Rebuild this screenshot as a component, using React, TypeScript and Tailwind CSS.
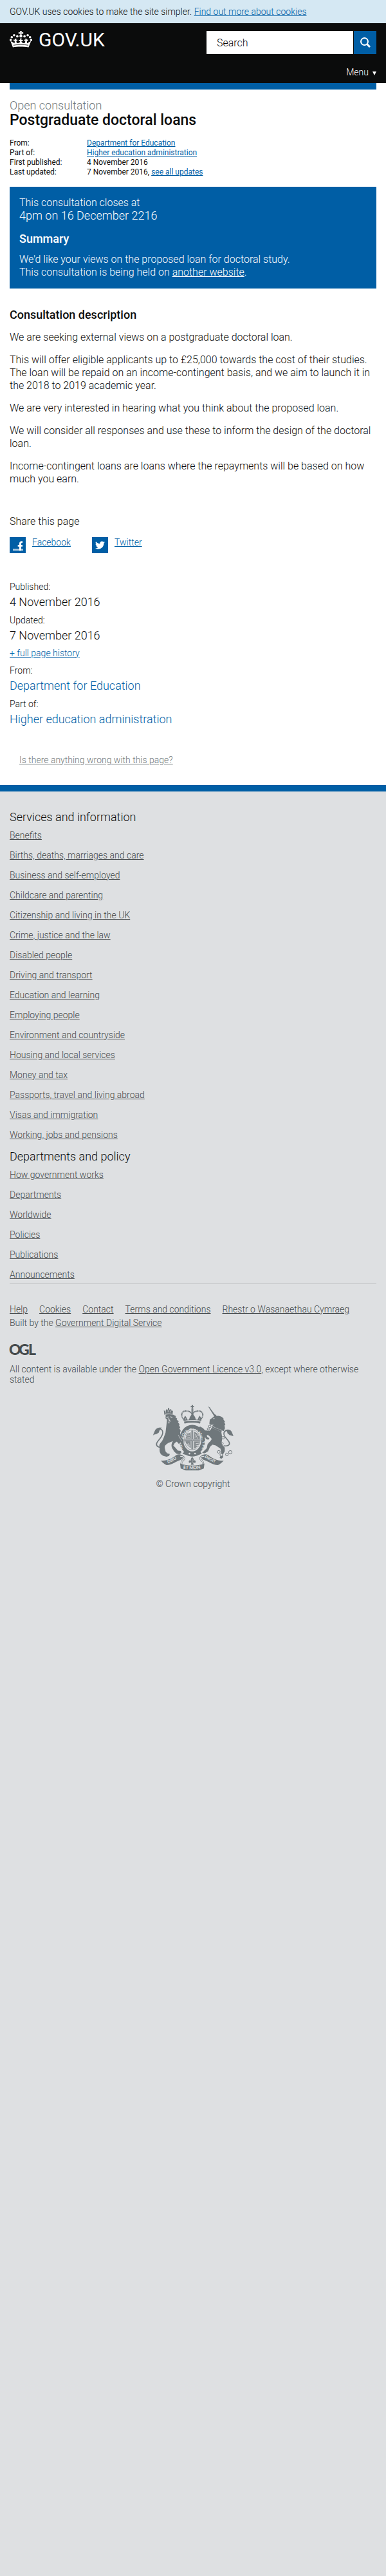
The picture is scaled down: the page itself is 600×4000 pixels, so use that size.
import React from 'react';
import { FaTwitter } from 'react-icons/fa';

const services = [
  'Benefits',
  'Births, deaths, marriages and care',
  'Business and self-employed',
  'Childcare and parenting',
  'Citizenship and living in the UK',
  'Crime, justice and the law',
  'Disabled people',
  'Driving and transport',
  'Education and learning',
  'Employing people',
  'Environment and countryside',
  'Housing and local services',
  'Money and tax',
  'Passports, travel and living abroad',
  'Visas and immigration',
  'Working, jobs and pensions',
];

const departments = [
  'How government works',
  'Departments',
  'Worldwide',
  'Policies',
  'Publications',
  'Announcements',
];

const metaLinks = ['Help', 'Cookies', 'Contact', 'Terms and conditions', 'Rhestr o Wasanaethau Cymraeg'];

function Crown() {
  return (
    <svg className="h-[26px] w-[35px]" viewBox="0 0 106 78" fill="#fff" aria-hidden="true">
      <path d="M49 0h8l-1 7 8-2v9l-8-2v6h-6v-6l-8 2V5l8 2z" />
      <circle cx="53" cy="24" r="7" />
      <circle cx="5" cy="42" r="5.5" />
      <circle cx="10" cy="29" r="5.5" />
      <circle cx="21" cy="20" r="5.5" />
      <circle cx="36" cy="25" r="5.5" />
      <circle cx="101" cy="42" r="5.5" />
      <circle cx="96" cy="29" r="5.5" />
      <circle cx="85" cy="20" r="5.5" />
      <circle cx="70" cy="25" r="5.5" />
      <path d="M4 47l9 5 10 6 1-12-5 2v-8l5 1 1-5h7l-1 6 5-2v8l-5-2 2 10 6 1 8-3 3-7-7 1v-7l7 1-2-7h9l-2 7 7-1v7l-7-1 3 7 8 3 6-1 2-10-5 2v-8l5 2-1-6h7l1 5 5-1v8l-5-2 1 12 10-6 9-5-12 30c-24-4-54-4-74 0z" />
      <path d="M18 67c22-4 48-4 70 0" fill="none" stroke="#0b0c0c" strokeWidth="2.5" />
    </svg>
  );
}

function FacebookIcon() {
  return (
    <svg className="size-[25px] shrink-0 bg-[#005ea5]" viewBox="0 0 75 75" aria-hidden="true">
      <path d="M15 54h48v9H15z" fill="#a3c4dd" />
      <path d="M45 63V44h-7v-8h7v-6c0-8 5-12 15-11v8c-5 0-6 1-6 4v5h6v8h-6v19z" fill="#fff" />
    </svg>
  );
}

function LogoOgl() {
  return (
    <svg className="h-[18px] w-[41px] overflow-visible" viewBox="0 0 41 18" role="img" aria-label="OGL">
      <g fill="#454a4c" fontFamily="Lato, sans-serif" fontWeight="900" fontSize="23">
        <text x="-1" y="17">O</text>
        <text x="14" y="17">G</text>
        <text x="29" y="17">L</text>
      </g>
    </svg>
  );
}

function Crest() {
  const ink = '#6f777b';
  const paper = '#dee0e2';
  return (
    <svg className="h-[103px] w-[125px] overflow-visible" viewBox="54 32 376 308" fill={ink} aria-hidden="true">
      <defs>
        <path id="garter" d="M196 246A48 59 0 1 1 278 246" />
        <path id="scroll-left" d="M123 306Q152 296 174 277" />
        <path id="scroll-right" d="M294 277Q326 300 352 305" />
        <path id="scroll-mid" d="M194 330Q237 338 281 329" />
      </defs>

      {/* royal crown */}
      <path d="M234 33h7l-1 5 5-1v7l-5-1 2 8h-9l2-8-5 1v-7l5 1z" />
      <path d="M233 51h9v36h-9z" opacity=".85" />
      <g fill="none" stroke={ink} strokeWidth="6" strokeDasharray="5 1.5">
        <path d="M200 103C180 85 186 62 206 61c15 0 24 5 29 13" />
        <path d="M274 103C294 85 288 62 268 61c-15 0-24 5-29 13" />
      </g>
      <path d="M196 108l3-17 5-8 6 9 4 10 8 0 4-13 8-11 4-4 4 4 8 11 4 13 8 0 4-10 6-9 5 8 3 17c-26-6-56-6-84 0z" />
      <path d="M198 111c26-6 52-6 78 0l-3 9c-24-6-48-6-72 0z" />
      <path d="M201 109c24-5 48-5 72 0" fill="none" stroke={paper} strokeWidth="2" strokeDasharray="5 4" />
      <path d="M217 86v12m39-12v12M205 95v6m64-6v6" stroke={paper} strokeWidth="2.5" />

      {/* garter and shield */}
      <ellipse cx="237" cy="197" rx="63" ry="71" fill={paper} />
      <ellipse cx="237" cy="197" rx="51" ry="62" fill="none" stroke={ink} strokeWidth="18" />
      <text fill={paper} fontFamily="Lato, sans-serif" fontWeight="900" fontSize="19">
        <textPath href="#garter">HONI SOIT QUI MAL Y PENSE</textPath>
      </text>
      <ellipse cx="237" cy="196" rx="37" ry="47" fill={paper} stroke={ink} strokeWidth="2" />
      <path d="M206 190l3-17 8-11 5 4 7-7 2 31zM245 157l14 8 10 15 2 11h-26zM205 202h25v33l-12-9-10-14zM245 203h26l-4 16-10 13-12 6z" opacity=".8" />
      <path d="M210 172l16 5m-18 4 18 5m-11-19 8 3m26-2 14 23m0-18-14 12m-37 28 12 16m-7-18 8 12m28-9 18-3m-18 13 16-3m-15 12 10-4" stroke={paper} strokeWidth="2.5" />
      <path d="M237 152v88M202 196h70" stroke={ink} strokeWidth="8" />
      <path d="M237 152v88M202 196h70" stroke={paper} strokeWidth="2" />
      <path d="M204 246c20 14 46 14 67 1l11 14c-12 2-22 12-45 13-20-1-32-11-46-12z" />
      <circle cx="224" cy="260" r="4" fill={paper} />
      <circle cx="250" cy="260" r="4" fill={paper} />

      {/* lion */}
      <path d="M107 75l-2-16 7 4 3-10 7 4 2-10h5l1 9 8-4 3 10 6-3-2 17c-14-4-25-4-38-1z" />
      <path d="M112 60v9m12-12v10m12-8v9" stroke={paper} strokeWidth="2.5" />
      <path d="M107 79c14-4 28-4 40-1l14 7-3 5 9 7-3 4 10 9-4 3 9 12-5 1 7 13-5 2 7 13-3 7 2 14 8 16 7 4-1 18-9 5-5-12-7 10-10-12-8 5c-8 7-8 16 0 22l13 15 14 2 2 9-8 6-14-2-12-11-9-15c-5-10-4-22 4-33-16 6-29 10-37 21-5 9 2 18 2 27l8 9 12 3-3 9-12 4-17-5c-14-8-18-19-15-37l-2-11c3-12 12-16 18-30l11-29 4-34 3-28-7-6 1-14-5-3 2-14-6-6z" />
      <path d="M116 91l10-2m9-1 9 4m-17 3 3 12 6 2m-8 2 0 8" stroke={paper} strokeWidth="4" fill="none" />
      <path d="M172 173c5 12 10 20 17 27M148 223l20-11" stroke={paper} strokeWidth="2" fill="none" />
      <path d="M88 231c-16-2-23-12-15-24 10-16 28-28 26-48-2-14-15-17-24-8-7 8-9 13-18 20" fill="none" stroke={ink} strokeWidth="5" />
      <path d="M95 139c-20-3-30 5-34 17l-8 20 9-9 4 4 14-8 5-13z" />

      {/* unicorn */}
      <path d="M311 39l7 5 31 42-7 4z" />
      <path d="M319 102l18-14 10-12 4 9c15-4 27 4 34 14l-3 2 8 9-3 4 5 11-4 3 2 14-6 13-44-18-3-12-14 1-6-6z" />
      <path d="M335 97l6-1" stroke={paper} strokeWidth="3" />
      <path d="M333 127l7-3 2 8 8-4 3 8 8-3 2 9 8-2 1 8 6 0-5 12-44-20z" />
      <path d="M334 134l42 18" stroke={paper} strokeWidth="2.5" strokeDasharray="4 3" />
      <path d="M327 140c16 5 31 13 46 20l3 19c3 16-4 26 0 39l13 15 0 16-9 17 2 11-8 7-9-3 8-22-4-22-22-15-16-4-11 11-9 20-16 10-12-2 12-12 10-10 3-17c6-11 16-15 20-27l-13-15-7-3-11 8-6 15-9-2 5-9-5-11 8-6-7-13-6-10-8 5-7-4 11-13 14 8 11 12 21 0 5-6z" />
      <path d="M300 150l8 8-6 10 5 14 10 6-5 8-11-5-8-17z" />
      <path d="M384 224c18 2 32-3 25-18-9-17-25-23-24-40 1-13 14-18 23-9l17 21" fill="none" stroke={ink} strokeWidth="5" />
      <path d="M391 150c16-6 28 0 32 12l7 17-11-7-4 4-13-10-3-11z" />
      <g fill={paper} stroke={ink} strokeWidth="3">
        <circle cx="319" cy="133" r="6" />
        <circle cx="312" cy="145" r="5" />
        <circle cx="381" cy="186" r="6" />
        <circle cx="378" cy="213" r="4" />
        <circle cx="361" cy="252" r="6.5" />
        <circle cx="373" cy="266" r="6.5" />
        <circle cx="399" cy="264" r="6.5" />
        <circle cx="415" cy="254" r="8" />
      </g>

      {/* motto scroll */}
      <path d="M90 293c23 2 50-8 72-26 13-7 27-3 38 8l-15 14c-24 7-43 24-68 25-10-4-19-12-27-21z" />
      <path d="M384 293c-23 2-50-8-72-26-13-7-27-3-38 8l15 14c24 7 43 24 68 25 10-4 19-12 27-21z" />
      <path d="M181 273c18-1 24 10 13 18-8 6-8 12-8 18m107-36c-18-1-24 10-13 18 8 6 8 12 8 18" fill="none" stroke={ink} strokeWidth="8" />
      <path d="M181 273c18-1 24 10 13 18-8 6-8 12-8 18m107-36c-18-1-24 10-13 18 8 6 8 12 8 18" fill="none" stroke={paper} strokeWidth="4" />
      <path d="M180 306c35 13 79 13 114 0l-3 24c-12 4-17 7-24 9h-60c-8-2-14-6-24-9z" />
      <path d="M237 276c9 9 8 14 3 20 7-9 15-5 13 5-4 5-7 1-8-1l-4 4 3 8h-14l3-8-4-4c-1 2-4 6-8 1-2-10 6-14 13-5-5-6-6-11 3-20z" />
      <path d="M237 284v20" stroke={paper} strokeWidth="2" />
      <g fill={paper} fontFamily="Lato, sans-serif" fontWeight="900" fontSize="20">
        <text><textPath href="#scroll-left">DIEU</textPath></text>
        <text fontSize="18"><textPath href="#scroll-right">DROIT</textPath></text>
        <text fontSize="21"><textPath href="#scroll-mid">ET MON</textPath></text>
      </g>
    </svg>
  );
}

function FooterList({ title, items }: { title: string; items: string[] }) {
  return (
    <section className="flex flex-col gap-2.5">
      <h2 className="text-[18px] leading-5 text-[#0b0c0c]">{title}</h2>
      <ul className="flex flex-col gap-[15px] text-sm leading-4">
        {items.map((item) => (
          <li key={item}>
            <a href="#" className="underline">{item}</a>
          </li>
        ))}
      </ul>
    </section>
  );
}

export default function App() {
  return (
    <div className="min-h-screen bg-[#dee0e2] font-['Roboto',sans-serif] text-base leading-5 font-light text-[#0b0c0c]">
      <div className="bg-[#d5e8f3] px-[15px] py-2.5 text-sm leading-4">
        GOV.UK uses cookies to make the site simpler.{' '}
        <a href="#" className="text-[#005ea5] underline">Find out more about cookies</a>
      </div>

      <header className="bg-[#0b0c0c] px-[15px] pt-3 pb-[7px] text-white">
        <div className="flex items-start justify-between">
          <a href="#" className="flex items-start gap-2.5">
            <Crown />
            <span className="text-[30px] leading-7 font-normal">GOV.UK</span>
          </a>
          <form className="flex w-[264px] gap-px" onSubmit={(e) => e.preventDefault()}>
            <label htmlFor="site-search" className="sr-only">Search GOV.UK</label>
            <input
              id="site-search"
              type="text"
              placeholder="Search"
              className="h-9 min-w-0 flex-1 bg-white px-4 text-base text-[#0b0c0c] placeholder:text-[#0b0c0c]"
            />
            <button type="submit" aria-label="Search" className="flex h-9 w-[35px] items-center justify-center bg-[#005ea5]">
              <svg className="size-4" viewBox="0 0 16 16" fill="none" stroke="#fff" strokeWidth="2" aria-hidden="true">
                <circle cx="6.5" cy="6.5" r="5.5" />
                <path d="M10.5 10.5l4.5 4.5" strokeWidth="3" />
              </svg>
            </button>
          </form>
        </div>
        <div className="mt-[18px] flex justify-end">
          <button type="button" className="flex items-center gap-1.5 text-sm leading-5">
            Menu
            <svg className="mt-1 h-1.5 w-1.5" viewBox="0 0 6 6" fill="#fff" aria-hidden="true">
              <path d="M0 0h6L3 6z" />
            </svg>
          </button>
        </div>
      </header>

      <main className="bg-white px-[15px] pb-[29px]">
        <div className="h-2.5 bg-[#005ea5]" />
        <p className="mt-[15px] text-[18px] text-[#6f777b]">Open consultation</p>
        <h1 className="text-[23px] leading-[25px] font-medium">Postgraduate doctoral loans</h1>

        <dl className="mt-4 grid grid-cols-[120px_1fr] text-xs leading-[15px] font-normal">
          <dt>From:</dt>
          <dd><a href="#" className="text-[#005ea5] underline">Department for Education</a></dd>
          <dt>Part of:</dt>
          <dd><a href="#" className="text-[#005ea5] underline">Higher education administration</a></dd>
          <dt>First published:</dt>
          <dd>4 November 2016</dd>
          <dt>Last updated:</dt>
          <dd>7 November 2016, <a href="#" className="text-[#005ea5] underline">see all updates</a></dd>
        </dl>

        <section className="mt-[15px] bg-[#005ea5] p-[15px] text-white">
          <p>This consultation closes at</p>
          <p className="text-[18px]">4pm on 16 December 2216</p>
          <h2 className="mt-4 text-[18px] font-medium">Summary</h2>
          <p className="mt-3">We'd like your views on the proposed loan for doctoral study.</p>
          <p>This consultation is being held on <a href="#" className="underline">another website</a>.</p>
        </section>

        <section className="mt-[31px] flex flex-col gap-[15px]">
          <h2 className="text-[18px] font-medium">Consultation description</h2>
          <p>We are seeking external views on a postgraduate doctoral loan.</p>
          <p>This will offer eligible applicants up to £25,000 towards the cost of their studies. The loan will be repaid on an income-contingent basis, and we aim to launch it in the 2018 to 2019 academic year.</p>
          <p>We are very interested in hearing what you think about the proposed loan.</p>
          <p>We will consider all responses and use these to inform the design of the doctoral loan.</p>
          <p>Income-contingent loans are loans where the repayments will be based on how much you earn.</p>
        </section>

        <section className="mt-[46px]">
          <h2>Share this page</h2>
          <ul className="mt-3.5 flex text-sm leading-4 text-[#005ea5]">
            <li className="w-32">
              <a href="#" className="flex gap-2.5 underline"><FacebookIcon />Facebook</a>
            </li>
            <li>
              <a href="#" className="flex gap-2.5 underline">
                <span className="flex size-[25px] items-center justify-center bg-[#005ea5]">
                  <FaTwitter className="size-[15px] text-white" />
                </span>
                Twitter
              </a>
            </li>
          </ul>
        </section>

        <dl className="mt-[42px] flex flex-col gap-2 text-[18px]">
          <div className="flex flex-col gap-1">
            <dt className="text-sm leading-5">Published:</dt>
            <dd>4 November 2016</dd>
          </div>
          <div className="flex flex-col gap-1">
            <dt className="text-sm leading-5">Updated:</dt>
            <dd>7 November 2016</dd>
            <dd className="mt-1 text-sm leading-[18px]"><a href="#" className="text-[#005ea5] underline">+ full page history</a></dd>
          </div>
          <div className="flex flex-col gap-1">
            <dt className="text-sm leading-5">From:</dt>
            <dd><a href="#" className="text-[#005ea5]">Department for Education</a></dd>
          </div>
          <div className="flex flex-col gap-1">
            <dt className="text-sm leading-5">Part of:</dt>
            <dd><a href="#" className="text-[#005ea5]">Higher education administration</a></dd>
          </div>
        </dl>

        <p className="mt-[43px] px-[15px] text-sm leading-5 text-[#6f777b]">
          <a href="#" className="underline">Is there anything wrong with this page?</a>
        </p>
      </main>

      <footer className="border-t-10 border-[#005ea5] px-[15px] pt-[30px] text-sm leading-4 text-[#454a4c]">
        <div className="flex flex-col gap-4 border-b border-[#bfc1c3] pb-1.5">
          <FooterList title="Services and information" items={services} />
          <FooterList title="Departments and policy" items={departments} />
        </div>

        <ul className="mt-[31px] flex flex-wrap gap-x-[18px]">
          {metaLinks.map((item) => (
            <li key={item}><a href="#" className="underline">{item}</a></li>
          ))}
        </ul>
        <p className="mt-[5px]">Built by the <a href="#" className="underline">Government Digital Service</a></p>

        <div className="mt-[25px] flex"><LogoOgl /></div>
        <p className="mt-[13px]">
          All content is available under the <a href="#" className="underline">Open Government Licence v3.0</a>, except where otherwise stated
        </p>

        <a href="#" className="mt-[31px] flex flex-col items-center gap-3 pb-8">
          <Crest />
          © Crown copyright
        </a>
      </footer>
    </div>
  );
}
